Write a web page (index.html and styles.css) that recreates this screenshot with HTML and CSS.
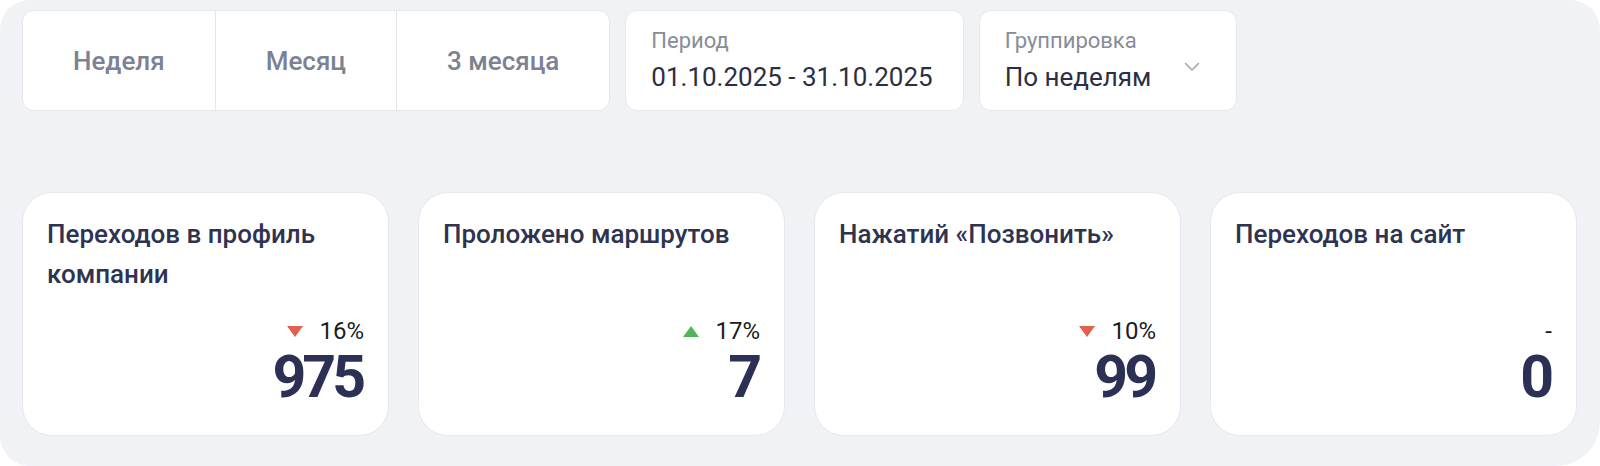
FILE: index.html
```html
<!DOCTYPE html>
<html lang="ru">
<head>
  <meta charset="UTF-8" />
  <title>Статистика профиля</title>
  <link rel="stylesheet" href="styles.css">
</head>
<body>

  <div class="panel">

    <div class="filters">
      <div class="segmented">
        <button class="segment">Неделя</button>
        <button class="segment">Месяц</button>
        <button class="segment">3 месяца</button>
      </div>

      <div class="field">
        <span class="field-label">Период</span>
        <span class="field-value">01.10.2025 - 31.10.2025</span>
      </div>

      <div class="field field-select">
        <div>
          <span class="field-label">Группировка</span>
          <span class="field-value">По неделям</span>
        </div>
        <svg class="chevron" width="16" height="10" viewBox="0 0 16 10">
          <path d="M1.5 1.5 L8 8 L14.5 1.5" fill="none" stroke="#a3a7b2" stroke-width="1.6" stroke-linecap="round" stroke-linejoin="round"/>
        </svg>
      </div>
    </div>

    <div class="stats">
      <div class="stat-card">
        <div class="stat-title">Переходов в профиль компании</div>
        <div class="stat-bottom">
          <div class="stat-delta"><span class="arrow down"></span>16%</div>
          <div class="stat-value">975</div>
        </div>
      </div>

      <div class="stat-card">
        <div class="stat-title">Проложено маршрутов</div>
        <div class="stat-bottom">
          <div class="stat-delta"><span class="arrow up"></span>17%</div>
          <div class="stat-value">7</div>
        </div>
      </div>

      <div class="stat-card">
        <div class="stat-title">Нажатий «Позвонить»</div>
        <div class="stat-bottom">
          <div class="stat-delta"><span class="arrow down"></span>10%</div>
          <div class="stat-value">99</div>
        </div>
      </div>

      <div class="stat-card">
        <div class="stat-title">Переходов на сайт</div>
        <div class="stat-bottom">
          <div class="stat-delta">-</div>
          <div class="stat-value">0</div>
        </div>
      </div>
    </div>

  </div>

</body>
</html>
```

FILE: styles.css
```css
body {
  font-family: Roboto, 'Noto Sans', sans-serif;
  background: #ffffff;
  margin: 0;
  padding: 0;
}

.panel {
  height: 466px;
  box-sizing: border-box;
  background: #f0f2f6;
  border-radius: 30px 30px 44px 30px;
  padding: 10px 23px 0 22px;
}

/* top row: period switch and selects */

.filters {
  display: flex;
  gap: 15px;
  height: 101px;
}

.segmented {
  display: flex;
  background: white;
  border: 1px solid #e6e8ed;
  border-radius: 12px;
  overflow: hidden;
}

.segment {
  font-family: inherit;
  font-size: 26px;
  font-weight: 500;
  color: #7c8193;
  background: none;
  border: none;
  padding: 0 50px;
  cursor: pointer;
}

.segment + .segment {
  border-left: 1px solid #e3e5ea;
}

.field {
  display: flex;
  flex-direction: column;
  background: white;
  border: 1px solid #e6e8ed;
  border-radius: 12px;
  padding: 17px 30px 0 25px;
  box-sizing: border-box;
}

.field-label {
  display: block;
  font-size: 22px;
  line-height: 26px;
  color: #878c99;
}

.field-value {
  display: block;
  margin-top: 7px;
  font-size: 26px;
  line-height: 32px;
  color: #2c2f44;
}

.field-select {
  flex-direction: row;
  align-items: flex-start;
  justify-content: space-between;
  width: 258px;
  padding-right: 36px;
}

.chevron {
  margin-top: 34px;
}

/* metric cards */

.stats {
  display: grid;
  grid-template-columns: repeat(4, 1fr);
  gap: 29px;
  margin-top: 81px;
}

.stat-card {
  height: 244px;
  box-sizing: border-box;
  background: white;
  border: 1px solid #e6e8ed;
  border-radius: 30px;
  padding: 21px 24px 29px 24px;
  display: flex;
  flex-direction: column;
  justify-content: space-between;
}

.stat-title {
  font-size: 26px;
  font-weight: 500;
  line-height: 40px;
  color: #2f3352;
}

.stat-bottom {
  text-align: right;
}

.stat-delta {
  display: flex;
  justify-content: flex-end;
  align-items: center;
  gap: 16px;
  font-size: 24px;
  line-height: 30px;
  color: #1b1b1f;
  margin-bottom: 1px;
}

.arrow {
  width: 0;
  height: 0;
  border-left: 8px solid transparent;
  border-right: 8px solid transparent;
}

.arrow.down {
  border-top: 11px solid #e2604f;
}

.arrow.up {
  border-bottom: 11px solid #4fb75a;
}

.stat-value {
  font-size: 59px;
  font-weight: 700;
  letter-spacing: -4px;
  line-height: 1;
  padding-right: 2px;
  color: #2c3054;
}
```
